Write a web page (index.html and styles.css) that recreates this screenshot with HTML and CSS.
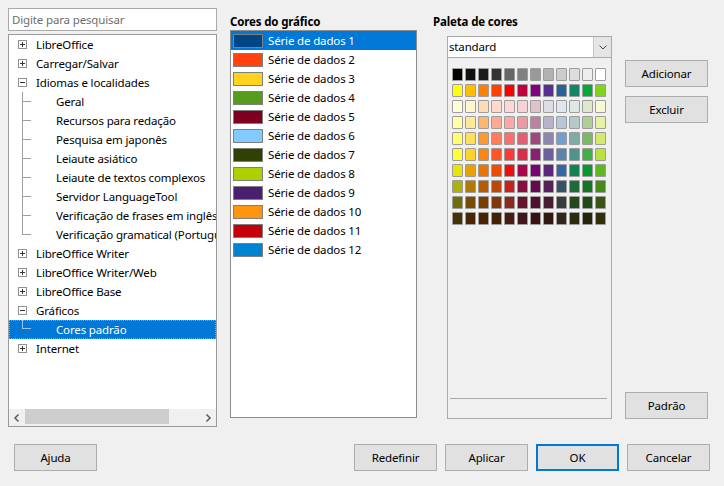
FILE: index.html
```html
<!DOCTYPE html>
<html lang="pt">
<head>
<meta charset="utf-8">
<title>Opções - Cores padrão</title>
<link rel="stylesheet" href="styles.css">
</head>
<body>
<div class="dialog">
  <div class="main">
    <div class="left">
      <div class="search">Digite para pesquisar</div>
      <div class="tree">
        <div class="rows">
          <div class="row"><svg class="exp" viewBox="0 0 9 9"><rect x="0.5" y="0.5" width="8" height="8" fill="#fff" stroke="#919191"/><path d="M2 4.5h5M4.5 2v5" stroke="#333"/></svg><span class="t1">LibreOffice</span></div>
          <div class="row"><svg class="exp" viewBox="0 0 9 9"><rect x="0.5" y="0.5" width="8" height="8" fill="#fff" stroke="#919191"/><path d="M2 4.5h5M4.5 2v5" stroke="#333"/></svg><span class="t1">Carregar/Salvar</span></div>
          <div class="row"><svg class="exp" viewBox="0 0 9 9"><rect x="0.5" y="0.5" width="8" height="8" fill="#fff" stroke="#919191"/><path d="M2 4.5h5" stroke="#333"/></svg><span class="t1">Idiomas e localidades</span></div>
          <div class="row"><span class="branch"></span><span class="t2">Geral</span></div>
          <div class="row"><span class="branch"></span><span class="t2">Recursos para redação</span></div>
          <div class="row"><span class="branch"></span><span class="t2">Pesquisa em japonês</span></div>
          <div class="row"><span class="branch"></span><span class="t2">Leiaute asiático</span></div>
          <div class="row"><span class="branch"></span><span class="t2">Leiaute de textos complexos</span></div>
          <div class="row"><span class="branch"></span><span class="t2">Servidor LanguageTool</span></div>
          <div class="row"><span class="branch"></span><span class="t2">Verificação de frases em inglês</span></div>
          <div class="row"><span class="branch last"></span><span class="t2">Verificação gramatical (Português)</span></div>
          <div class="row"><svg class="exp" viewBox="0 0 9 9"><rect x="0.5" y="0.5" width="8" height="8" fill="#fff" stroke="#919191"/><path d="M2 4.5h5M4.5 2v5" stroke="#333"/></svg><span class="t1">LibreOffice Writer</span></div>
          <div class="row"><svg class="exp" viewBox="0 0 9 9"><rect x="0.5" y="0.5" width="8" height="8" fill="#fff" stroke="#919191"/><path d="M2 4.5h5M4.5 2v5" stroke="#333"/></svg><span class="t1">LibreOffice Writer/Web</span></div>
          <div class="row"><svg class="exp" viewBox="0 0 9 9"><rect x="0.5" y="0.5" width="8" height="8" fill="#fff" stroke="#919191"/><path d="M2 4.5h5M4.5 2v5" stroke="#333"/></svg><span class="t1">LibreOffice Base</span></div>
          <div class="row"><svg class="exp" viewBox="0 0 9 9"><rect x="0.5" y="0.5" width="8" height="8" fill="#fff" stroke="#919191"/><path d="M2 4.5h5" stroke="#333"/></svg><span class="t1">Gráficos</span></div>
          <div class="row selected"><span class="branch last"></span><span class="t2">Cores padrão</span></div>
          <div class="row"><svg class="exp" viewBox="0 0 9 9"><rect x="0.5" y="0.5" width="8" height="8" fill="#fff" stroke="#919191"/><path d="M2 4.5h5M4.5 2v5" stroke="#333"/></svg><span class="t1">Internet</span></div>
        </div>
        <div class="hscroll">
          <span class="sbtn"><svg viewBox="0 0 16 16" width="16" height="16"><path d="M9.5 4.5L6 8l3.5 3.5" fill="none" stroke="#606060" stroke-width="1.6"/></svg></span>
          <span class="track"><span class="thumb"></span></span>
          <span class="sbtn"><svg viewBox="0 0 16 16" width="16" height="16"><path d="M6.5 4.5L10 8l-3.5 3.5" fill="none" stroke="#606060" stroke-width="1.6"/></svg></span>
        </div>
      </div>
    </div>

    <div class="mid">
      <div class="label">Cores do gráfico</div>
      <div class="list">
        <div class="item selected"><span class="sw" style="background:#004586"></span>Série de dados 1</div>
        <div class="item"><span class="sw" style="background:#ff420e"></span>Série de dados 2</div>
        <div class="item"><span class="sw" style="background:#ffd320"></span>Série de dados 3</div>
        <div class="item"><span class="sw" style="background:#579d1c"></span>Série de dados 4</div>
        <div class="item"><span class="sw" style="background:#7e0021"></span>Série de dados 5</div>
        <div class="item"><span class="sw" style="background:#83caff"></span>Série de dados 6</div>
        <div class="item"><span class="sw" style="background:#314004"></span>Série de dados 7</div>
        <div class="item"><span class="sw" style="background:#aecf00"></span>Série de dados 8</div>
        <div class="item"><span class="sw" style="background:#4b1f6f"></span>Série de dados 9</div>
        <div class="item"><span class="sw" style="background:#ff950e"></span>Série de dados 10</div>
        <div class="item"><span class="sw" style="background:#c5000b"></span>Série de dados 11</div>
        <div class="item"><span class="sw" style="background:#0084d1"></span>Série de dados 12</div>
      </div>
    </div>

    <div class="right">
      <div class="label label-pal">Paleta de cores</div>
      <div class="palbox">
        <div class="select"><span class="val">standard</span><span class="drop"><svg viewBox="0 0 16 20" width="16" height="20"><path d="M4.5 8.5l3.5 3.5 3.5-3.5" fill="none" stroke="#444" stroke-width="1"/></svg></span></div>
        <div class="palette">
          <div class="grid">
            <span class="c" style="background:#000000"></span><span class="c" style="background:#111111"></span><span class="c" style="background:#1c1c1c"></span><span class="c" style="background:#333333"></span><span class="c" style="background:#666666"></span><span class="c" style="background:#808080"></span><span class="c" style="background:#999999"></span><span class="c" style="background:#b2b2b2"></span><span class="c" style="background:#cccccc"></span><span class="c" style="background:#dddddd"></span><span class="c" style="background:#eeeeee"></span><span class="c" style="background:#ffffff"></span>
            <span class="c" style="background:#ffff00"></span><span class="c" style="background:#ffbf00"></span><span class="c" style="background:#ff8000"></span><span class="c" style="background:#ff4000"></span><span class="c" style="background:#ff0000"></span><span class="c" style="background:#bf0041"></span><span class="c" style="background:#800080"></span><span class="c" style="background:#55308d"></span><span class="c" style="background:#2a6099"></span><span class="c" style="background:#158466"></span><span class="c" style="background:#00a933"></span><span class="c" style="background:#81d41a"></span>
            <span class="c" style="background:#ffffd7"></span><span class="c" style="background:#fff5ce"></span><span class="c" style="background:#ffdbb6"></span><span class="c" style="background:#ffd8ce"></span><span class="c" style="background:#ffd7d7"></span><span class="c" style="background:#f7d1d5"></span><span class="c" style="background:#e0c2cd"></span><span class="c" style="background:#dedce6"></span><span class="c" style="background:#dee6ef"></span><span class="c" style="background:#dee7e5"></span><span class="c" style="background:#dde8cb"></span><span class="c" style="background:#f6f9d4"></span>
            <span class="c" style="background:#ffffa6"></span><span class="c" style="background:#ffe994"></span><span class="c" style="background:#ffb66c"></span><span class="c" style="background:#ffaa95"></span><span class="c" style="background:#ffa6a6"></span><span class="c" style="background:#ec9ba4"></span><span class="c" style="background:#bf819e"></span><span class="c" style="background:#b7b3ca"></span><span class="c" style="background:#b4c7dc"></span><span class="c" style="background:#b3cac7"></span><span class="c" style="background:#afd095"></span><span class="c" style="background:#e8f2a1"></span>
            <span class="c" style="background:#ffff6d"></span><span class="c" style="background:#ffde59"></span><span class="c" style="background:#ff972f"></span><span class="c" style="background:#ff7b59"></span><span class="c" style="background:#ff6d6d"></span><span class="c" style="background:#e16173"></span><span class="c" style="background:#a1467e"></span><span class="c" style="background:#8e86ae"></span><span class="c" style="background:#729fcf"></span><span class="c" style="background:#81aca6"></span><span class="c" style="background:#77bc65"></span><span class="c" style="background:#d4ea6b"></span>
            <span class="c" style="background:#ffff38"></span><span class="c" style="background:#ffd428"></span><span class="c" style="background:#ff860d"></span><span class="c" style="background:#ff5429"></span><span class="c" style="background:#ff3838"></span><span class="c" style="background:#d62e4e"></span><span class="c" style="background:#8d1d75"></span><span class="c" style="background:#6b5e9b"></span><span class="c" style="background:#5983b0"></span><span class="c" style="background:#50938a"></span><span class="c" style="background:#3faf46"></span><span class="c" style="background:#bbe33d"></span>
            <span class="c" style="background:#e6e600"></span><span class="c" style="background:#e8a202"></span><span class="c" style="background:#ea7500"></span><span class="c" style="background:#ed4c05"></span><span class="c" style="background:#f10d0c"></span><span class="c" style="background:#a7074b"></span><span class="c" style="background:#780373"></span><span class="c" style="background:#5b277d"></span><span class="c" style="background:#3465a4"></span><span class="c" style="background:#168253"></span><span class="c" style="background:#069a2e"></span><span class="c" style="background:#5eb91e"></span>
            <span class="c" style="background:#acb20c"></span><span class="c" style="background:#b47804"></span><span class="c" style="background:#b85c00"></span><span class="c" style="background:#be480a"></span><span class="c" style="background:#c9211e"></span><span class="c" style="background:#861141"></span><span class="c" style="background:#650953"></span><span class="c" style="background:#55215b"></span><span class="c" style="background:#355269"></span><span class="c" style="background:#1e6a39"></span><span class="c" style="background:#127622"></span><span class="c" style="background:#468a1a"></span>
            <span class="c" style="background:#706e0c"></span><span class="c" style="background:#784b04"></span><span class="c" style="background:#7b3d00"></span><span class="c" style="background:#813709"></span><span class="c" style="background:#8d281e"></span><span class="c" style="background:#611729"></span><span class="c" style="background:#4e102d"></span><span class="c" style="background:#481d32"></span><span class="c" style="background:#383d3c"></span><span class="c" style="background:#28471f"></span><span class="c" style="background:#224b12"></span><span class="c" style="background:#395511"></span>
            <span class="c" style="background:#443205"></span><span class="c" style="background:#472702"></span><span class="c" style="background:#492300"></span><span class="c" style="background:#432005"></span><span class="c" style="background:#4a1c11"></span><span class="c" style="background:#40161a"></span><span class="c" style="background:#3b1214"></span><span class="c" style="background:#351711"></span><span class="c" style="background:#2f2618"></span><span class="c" style="background:#2c2a0f"></span><span class="c" style="background:#26250a"></span><span class="c" style="background:#302e0b"></span>
          </div>
          <div class="sep"></div>
        </div>
      </div>
    </div>

    <div class="side">
      <button class="btn">Adicionar</button>
      <button class="btn">Excluir</button>
      <div class="spacer"></div>
      <button class="btn">Padrão</button>
    </div>
  </div>

  <div class="footer">
    <button class="btn">Ajuda</button>
    <div class="spacer"></div>
    <div class="actions">
      <button class="btn">Redefinir</button>
      <button class="btn">Aplicar</button>
      <button class="btn ok">OK</button>
      <button class="btn">Cancelar</button>
    </div>
  </div>
</div>
</body>
</html>
```
FILE: styles.css
```css
* { box-sizing: border-box; }
html, body { margin: 0; padding: 0; }
body {
  background: #f0f0f0;
  font-family: "Noto Sans", "Open Sans", "Liberation Sans", sans-serif;
  font-size: 11.5px;
  letter-spacing: -0.15px;
  color: #000;
}
.dialog { width: 724px; height: 486px; overflow: hidden; }
.main { display: flex; padding: 8px 0 0 8px; height: 427px; }

/* left */
.left { width: 209px; display: flex; flex-direction: column; }
.search {
  height: 23px; background: #fff; border: 1px solid #a9a9a9;
  color: #6d6d6d; padding-left: 3px; line-height: 21px;
}
.tree {
  margin-top: 3px; height: 393px; background: #fff; border: 1px solid #9a9a9a;
  display: flex; flex-direction: column; overflow: hidden;
}
.rows { flex: 1; overflow: hidden; }
.row { height: 19px; display: flex; align-items: center; white-space: nowrap; }
.exp { width: 9px; height: 9px; margin-left: 9px; flex: none; }
.t1 { margin-left: 9px; }
.t2 { margin-left: 25px; }
.branch {
  width: 9px; height: 19px; margin-left: 13px; flex: none;
  background:
    linear-gradient(#a0a0a0, #a0a0a0) left top / 1px 100% no-repeat,
    linear-gradient(#a0a0a0, #a0a0a0) left 9px / 9px 1px no-repeat;
}
.branch.last {
  background:
    linear-gradient(#a0a0a0, #a0a0a0) left top / 1px 10px no-repeat,
    linear-gradient(#a0a0a0, #a0a0a0) left 9px / 9px 1px no-repeat;
}
.row.selected {
  background: #0078d7; color: #fff;
  border: 1px dotted #e8892a;
}
.row.selected .branch {
  margin-left: 12px;
  background:
    linear-gradient(#9cc3e8, #9cc3e8) left top / 1px 9px no-repeat,
    linear-gradient(#9cc3e8, #9cc3e8) left 8px / 9px 1px no-repeat;
}
.hscroll { height: 17px; display: flex; background: #f0f0f0; flex: none; }
.sbtn { width: 16px; height: 17px; display: flex; align-items: center; justify-content: center; flex: none; }
.track { flex: 1; display: flex; align-items: stretch; padding: 0; }
.thumb { width: 144px; background: #cdcdcd; margin: 0 0 2px 0; }

/* middle */
.mid { width: 187px; margin-left: 13px; display: flex; flex-direction: column; }
.label { height: 22px; padding-top: 6px; font-weight: bold; line-height: 16px; }
.list { height: 388px; background: #fff; border: 1px solid #8c8c8c; }
.item { height: 19px; display: flex; align-items: center; white-space: nowrap; }
.item.selected { background: #0078d7; color: #fff; }
.sw { width: 30px; height: 14px; border: 1px solid #7f7f7f; margin-left: 2px; margin-right: 5px; flex: none; }

/* right */
.right { width: 179px; margin-left: 16px; display: flex; flex-direction: column; }
.label-pal { height: 28px; }
.palbox { margin-left: 14px; width: 165px; display: flex; flex-direction: column; }
.select {
  height: 22px; background: #fff; border: 1px solid #a9a9a9; display: flex; align-items: stretch;
}
.val { flex: 1; padding-left: 1px; line-height: 20px; }
.drop {
  width: 18px; background: #e5e5e5; border-left: 1px solid #c8c8c8;
  display: flex; align-items: center; justify-content: center;
}
.palette {
  height: 361px; border: 1px solid #a9a9a9; border-top: none;
  display: flex; flex-direction: column;
}
.grid {
  display: grid; grid-template-columns: repeat(12, 11px); column-gap: 2px; row-gap: 3px;
  padding: 10px 0 0 4px;
}
.c { width: 11px; height: 13px; border: 1px solid #9d9d9d; border-radius: 1px; display: block; }
.sep { margin: auto 4px 19px 2px; height: 1px; background: #a9a9a9; }

/* side buttons */
.side { width: 83px; margin-left: 13px; display: flex; flex-direction: column; padding-top: 52px; height: 411px; }
.side .btn + .btn { margin-top: 9px; }
.spacer { flex: 1; }
.btn {
  width: 83px; height: 27px; background: #e1e1e1; border: 1px solid #adadad;
  font: inherit; letter-spacing: inherit; color: #000; padding: 0; margin: 0; border-radius: 0;
}
.btn.ok { border: 2px solid #0078d7; }

.footer { display: flex; margin-top: 17px; padding: 0 14px; height: 27px; }
.actions { display: flex; gap: 8px; }
```
